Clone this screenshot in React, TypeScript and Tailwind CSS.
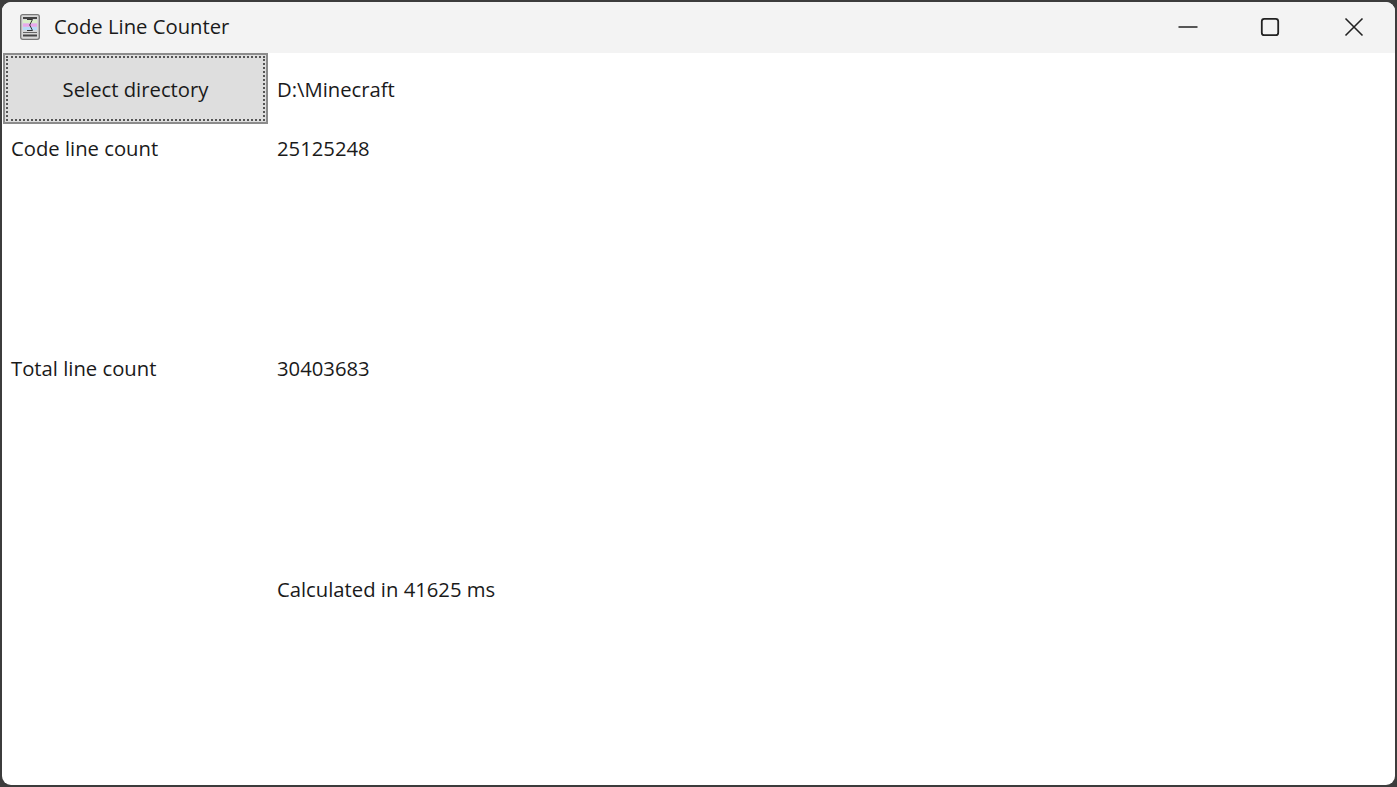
export default function App() {
  return (
    <div className="w-[1397px] h-[787px] bg-[#3c3c3c] pt-[2px] px-[2px] pb-[2px] overflow-hidden text-[#1a1a1a] font-['Open_Sans','Noto_Sans',sans-serif] text-[20.25px] leading-[28px]">
      <div className="w-full h-full bg-white rounded-[9px] overflow-hidden flex flex-col">
        <div className="h-[51px] bg-[#f3f3f3] flex items-center pb-[3px] shrink-0">
          <svg width="20" height="26" viewBox="0 0 20 26" className="ml-[18px] mt-[1px]">
            <rect x="0.7" y="0.7" width="18.6" height="24.6" rx="2" fill="#d8d8d8" stroke="#777" strokeWidth="1.3" />
            <rect x="3" y="3" width="14" height="2" fill="#444" />
            <rect x="3" y="6" width="14" height="3" fill="#d9f0c8" />
            <rect x="3" y="9.5" width="14" height="3.2" fill="#e8a8ec" />
            <rect x="3" y="13" width="14" height="3.2" fill="#b8dcf8" />
            <path d="M7 5.5 L12.5 5.5 L9.7 11 L12.5 16.5 L7 16.5" fill="none" stroke="#333" strokeWidth="1" />
            <rect x="3" y="18" width="14" height="1" fill="#666" />
            <rect x="3" y="20.5" width="14" height="2" fill="#444" />
          </svg>
          <span className="ml-[14px]">Code Line Counter</span>
          <div className="ml-auto flex items-center mr-[31px] mt-[1px]">
            <svg width="20" height="20" viewBox="0 0 20 20" className="mr-[62px]"><path d="M0.5 10 H19.5" stroke="#222" strokeWidth="1.4" /></svg>
            <svg width="20" height="20" viewBox="0 0 20 20" className="mr-[64px]"><rect x="1.8" y="1.8" width="16.4" height="16.4" rx="2.5" fill="none" stroke="#222" strokeWidth="1.8" /></svg>
            <svg width="20" height="20" viewBox="0 0 20 20"><path d="M1.5 1.5 L18.5 18.5 M18.5 1.5 L1.5 18.5" stroke="#222" strokeWidth="1.6" /></svg>
          </div>
        </div>
        <div className="grid grid-cols-[266px_1fr] grid-rows-[71px_220px_221px_1fr] flex-1">
          <div className="border-2 border-[#8c8c8c] bg-[#dedede] p-px ml-px">
            <div className="w-full h-full border-2 border-dotted border-[#555] flex items-center justify-center pt-[1px]">Select directory</div>
          </div>
          <div className="pl-[9px] flex items-center pt-px">D:\Minecraft</div>
          <div className="pl-[9px] pt-[10px]">Code line count</div>
          <div className="pl-[9px] pt-[10px]">25125248</div>
          <div className="pl-[9px] pt-[10px]">Total line count</div>
          <div className="pl-[9px] pt-[10px]">30403683</div>
          <div />
          <div className="pl-[9px] pt-[10px]">Calculated in 41625 ms</div>
        </div>
      </div>
    </div>
  );
}
